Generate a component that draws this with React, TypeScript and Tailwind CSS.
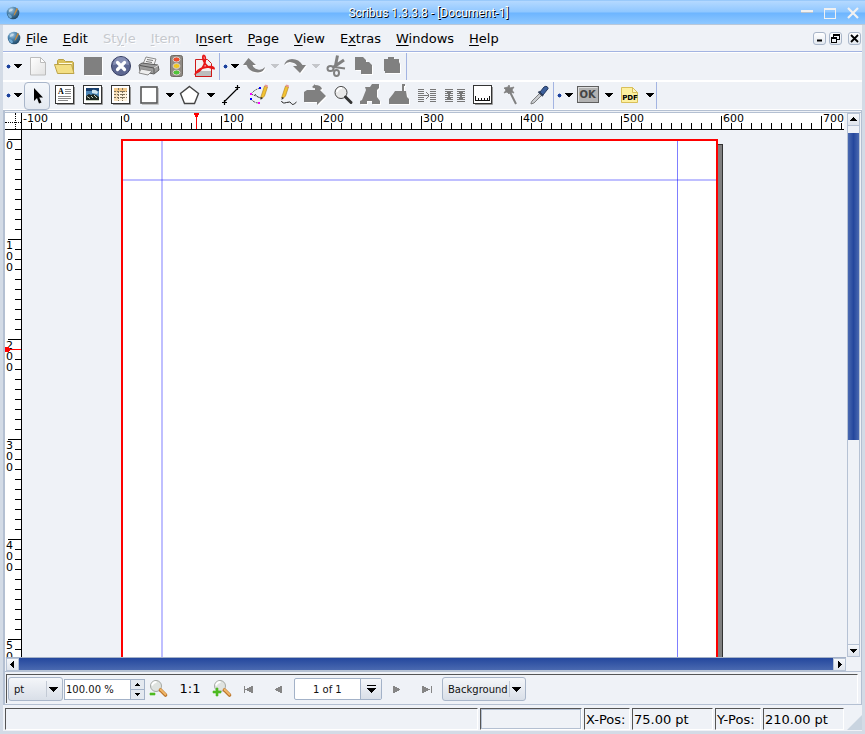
import React from "react";

const SANS = "font-['DejaVu_Sans','Verdana',sans-serif]";

/* ---------- shared bits ---------- */

function Icon({ children }: { children: React.ReactNode }) {
  return (
    <svg viewBox="0 0 24 24" className="block size-6" aria-hidden="true">
      {children}
    </svg>
  );
}

function Down({ muted = false }: { muted?: boolean }) {
  return (
    <svg viewBox="0 0 8 4" className={muted ? "block h-1 w-2 fill-[#c4c6ca]" : "block h-1 w-2 fill-black"} shapeRendering="crispEdges" aria-hidden="true">
      <path d="M0 0h8v1h-1v1h-1v1h-1v1h-2v-1h-1v-1h-1v-1h-1z" />
    </svg>
  );
}

function Globe() {
  return (
    <svg viewBox="0 0 14 14" className="block size-3.5" aria-hidden="true">
      <defs>
        <radialGradient id="globe" cx="0.35" cy="0.25" r="0.8">
          <stop offset="0" stopColor="#a9c9e0" />
          <stop offset="0.45" stopColor="#4b83ad" />
          <stop offset="1" stopColor="#1f4562" />
        </radialGradient>
      </defs>
      <circle cx="7" cy="7" r="6.300" fill="url(#globe)" />
      <path d="M2 8q3 0 4 3l-1 1.500Q2 11 2 8z" fill="#6fa9d2" />
      <path d="M10.500 2L8 8l-.5 2 1.500-1.500L12 3z" fill="#c98b3c" />
      <path d="M3 4q2-2 4-1l-1 2-3 1z" fill="#d5e6f0" opacity="0.700" />
    </svg>
  );
}

function Tool({ label, children, active = false }: { label: string; children: React.ReactNode; active?: boolean }) {
  return (
    <button type="button" aria-label={label} className="flex w-7 justify-center">
      <span className={active ? "rounded-[3px] bg-linear-to-b from-[#f4f7fb] to-[#e4e9f1] outline outline-[#a9b6ca]" : ""}>
        <Icon>{children}</Icon>
      </span>
    </button>
  );
}

function Drop({ label, muted = false }: { label: string; muted?: boolean }) {
  return (
    <button type="button" aria-label={label} className="flex h-6 w-[13px] items-center justify-center">
      <Down muted={muted} />
    </button>
  );
}

function Handle({ label }: { label: string }) {
  return (
    <span className="flex h-6 w-5 items-center gap-[3px] pl-[3px]">
      <svg viewBox="0 0 5 5" className="size-[5px]" shapeRendering="crispEdges" aria-hidden="true">
        <path d="M1 1h3v3h-3z" fill="#1c419c" />
        <path d="M2 0h1v1h-1zM2 4h1v1h-1zM0 2h1v1h-1zM4 2h1v1h-1z" fill="#8fa6d6" />
      </svg>
      <button type="button" aria-label={label}>
        <Down />
      </button>
    </span>
  );
}

function Toolbar({ children }: { children: React.ReactNode }) {
  return <div className="flex h-[29px] border-y border-white pt-px">{children}</div>;
}

function Bar() {
  return <span className="-mt-px w-px bg-[#a3b4e2]" />;
}

/* ---------- tool icons ---------- */

const GREY = "#808080";

function Grey({ d }: { d: string }) {
  return (
    <>
      <path d={d} fill="#fff" transform="translate(1 1)" />
      <path d={d} fill={GREY} />
    </>
  );
}

function Framed() {
  return (
    <>
      <path d="M4 21.500h17.500V4" stroke="#999" fill="none" />
      <rect x="2.500" y="2.500" width="18" height="18" fill="#fff" stroke="#333" />
    </>
  );
}

function NewIcon() {
  return (
    <>
      <defs>
        <linearGradient id="sheet" x1="0" y1="0" x2="1" y2="1">
          <stop offset="0" stopColor="#fff" />
          <stop offset="1" stopColor="#e2e2e2" />
        </linearGradient>
      </defs>
      <path d="M5.500 3.500h10l5 5v12.500h-15z" fill="url(#sheet)" stroke="#bcbcbc" />
      <path d="M15.500 3.500v5h5z" fill="#fff" stroke="#bcbcbc" />
    </>
  );
}

function OpenIcon() {
  return (
    <>
      <path d="M4.500 17V6.500l1-1h5l2 2h7l1 1V18z" fill="#dcc25a" stroke="#b8a046" />
      <path d="M6 9h13v5H6z" fill="#fffbe0" />
      <path d="M1.500 10.500h17l2.500 9H4.500z" fill="#f3df84" stroke="#bda44a" />
    </>
  );
}

function CloseIcon() {
  return (
    <>
      <circle cx="12" cy="12" r="9.500" fill="#5d6791" stroke="#363e63" />
      <path d="M4 11a8 8 0 0116 0q-8-2-16 0z" fill="#8790b5" />
      <path d="M8.500 8.500l7 7M15.500 8.500l-7 7" stroke="#fff" strokeWidth="3.200" strokeLinecap="round" />
    </>
  );
}

function PrintIcon() {
  return (
    <>
      <path d="M6 10l3-7 10 2-2 6z" fill="#f2f2f2" stroke="#8d8d8d" />
      <path d="M10 5.500l6 1M9 7.500l6 1" stroke="#777" />
      <path d="M2 11l3-2 16 2 1 5-5 4-14-3z" fill="#9c9c9c" stroke="#5c5c5c" />
      <path d="M3 11.500l14 2.500v5" fill="none" stroke="#555" />
      <path d="M4 15l11 2-4 4-9-2z" fill="#eee" stroke="#8a8a8a" />
      <path d="M17 14l5-3" stroke="#d9d9d9" />
    </>
  );
}

function TrafficIcon() {
  return (
    <>
      <rect x="5.500" y="1.500" width="12" height="21" rx="2" fill="#8f8a84" stroke="#6e6963" />
      <ellipse cx="11.500" cy="5.500" rx="3.500" ry="2.500" fill="#ee4b2b" stroke="#d8d0c8" />
      <ellipse cx="11.500" cy="12" rx="3.500" ry="2.500" fill="#f0c71e" stroke="#d8d0c8" />
      <ellipse cx="11.500" cy="18.500" rx="3.500" ry="2.500" fill="#4fc53a" stroke="#d8d0c8" />
    </>
  );
}

function PdfIcon() {
  return (
    <>
      <path d="M2.500 5.500h12l4 4v13h-16z" fill="#f3f1f1" stroke="#c22" />
      <path d="M3 17h15v5H3z" fill="#bdbdbd" />
      <path d="M2.500 6v16.500h16V10" fill="none" stroke="#d01818" />
      <path d="M3 19q7-3 9-11 1-6-1-6.500-2 0-.5 5Q13 14 21 14.500 21 12 14 13 6 14 3 19z" fill="none" stroke="#e81717" strokeWidth="1.800" />
    </>
  );
}

function CutIcon() {
  return (
    <g fill="none" stroke={GREY}>
      <path d="M13.500 1.500L11 14M20 6L9 13.500" strokeWidth="3" />
      <ellipse cx="6.500" cy="14.500" rx="3" ry="2.500" strokeWidth="2" />
      <ellipse cx="12.500" cy="19" rx="2.500" ry="3" strokeWidth="2" />
      <path d="M10 13l11 1.500" strokeWidth="2" />
    </g>
  );
}

function PointerIcon() {
  return <path d="M9 5v13l3-3 2 5.500 2.500-1-2.300-5H18z" fill="#000" />;
}

function TextFrameIcon() {
  return (
    <>
      <Framed />
      <text x="5" y="11" fontSize="8" fontWeight="700" fontFamily="Liberation Serif, serif">A</text>
      <path d="M12 6.500h6M12 8.500h6M12 10.500h6M5 13.500h13M5 15.500h13M5 17.500h10" stroke="#888" shapeRendering="crispEdges" />
    </>
  );
}

function ImageFrameIcon() {
  return (
    <>
      <Framed />
      <rect x="5" y="5" width="13" height="13" fill="#4d87b8" />
      <path d="M5 5h13v3H5z" fill="#173e6e" />
      <path d="M11 7q4-1 6 2l-1 2-5-1z" fill="#cfe4f0" />
      <path d="M5 13l3-2 2 1 2-1 3 1 3 2v4H5z" fill="#1c2622" />
      <path d="M6 13.500l3 2M10 13l2 2M13 12l3 3M5 17.500h13" stroke="#c8d0c0" />
    </>
  );
}

function TableIcon() {
  return (
    <>
      <Framed />
      <rect x="5" y="5" width="13" height="13" fill="#fdf1dc" />
      <path d="M5 5h13v4H5z" fill="#f3c98b" />
      <path d="M5 9h4v9H5z" fill="#f8dfb8" />
      <path d="M5 8.500h13M5 11.500h13M5 14.500h13M9.500 5v13M13.500 5v13" stroke="#7d705a" strokeDasharray="2 1" fill="none" shapeRendering="crispEdges" />
    </>
  );
}

function RectIcon() {
  return (
    <>
      <path d="M5 21.500h16.500V5" stroke="#c4c4c4" fill="none" />
      <rect x="4" y="4" width="16" height="16" fill="#fff" stroke="#555" strokeWidth="1.600" />
    </>
  );
}

function PolygonIcon() {
  return <path d="M11.500 3.500l9 7-4 10H6.500L2.500 10.500z" fill="#fff" stroke="#444" strokeWidth="1.400" />;
}

function LineIcon() {
  return <path d="M5 19L19 5M3 19.500h5M5.500 17v5M16 4.500h5M18.500 2v5" stroke="#000" strokeWidth="1.200" fill="none" />;
}

function Pencil() {
  return (
    <>
      <path d="M13.500 15l1-3 3-9 3 1-3 9-2 2z" fill="#f3c232" stroke="#a87a18" strokeWidth="0.600" />
      <path d="M17.500 3l1-1.500 2.500 1-.5 2z" fill="#e79595" />
      <path d="M13.500 17l.5-3 2 1z" fill="#333" />
    </>
  );
}

function BezierIcon() {
  return (
    <>
      <path d="M4 11q4-5 10-6M4 16q3 4 8 4M8 11q3 4 6 4M4 11l10 4" stroke="#444" fill="none" strokeDasharray="2 1" />
      <Pencil />
      <path d="M3 10h2v2H3zM11 19h2v2h-2z" fill="#f0f" />
      <path d="M3 15h2v2H3zM12 4h2v2h-2z" fill="#00f" />
    </>
  );
}

function FreehandIcon() {
  return (
    <>
      <g transform="translate(-7 0)"><Pencil /></g>
      <path d="M6.500 18q1 3 5 1.500t5 1 5-1.500" stroke="#222" fill="none" />
    </>
  );
}

function ZoomIcon() {
  return (
    <>
      <circle cx="10" cy="9.500" r="6" fill="#e8e8e8" stroke="#444" />
      <path d="M6 9q1-4 5-4" stroke="#fff" strokeWidth="2" fill="none" />
      <path d="M14.500 14l5.500 5.500" stroke="#333" strokeWidth="3" strokeLinecap="round" />
    </>
  );
}

function LinkIcon() {
  return (
    <g stroke="#777" shapeRendering="crispEdges">
      <path d="M3 6.500h6M3 8.500h6M3 10.500h6M3 12.500h6M3 14.500h6M3 16.500h6M3 18.500h6M15 6.500h6M15 8.500h6M15 10.500h6M15 12.500h6M15 14.500h6M15 16.500h6M15 18.500h6M8 12.500h6" />
      <path d="M11 9.500h1M12 10.500h1M13 11.500h1M13 13.500h1M12 14.500h1M11 15.500h1" />
    </g>
  );
}

function UnlinkIcon() {
  return (
    <g stroke="#777" shapeRendering="crispEdges">
      <path d="M2 6.500h8M2 8.500h8M2 10.500h8M2 12.500h8M2 14.500h8M2 16.500h8M2 18.500h8M14 6.500h8M14 8.500h8M14 10.500h8M14 12.500h8M14 14.500h8M14 16.500h8M14 18.500h8" />
      <path d="M4 9.500h4M5 11.500h2M5 13.500h2M4 15.500h4M16 9.500h4M17 11.500h2M17 13.500h2M16 15.500h4" />
    </g>
  );
}

function MeasureIcon() {
  return (
    <>
      <Framed />
      <path d="M4.500 13v4.500h14V13M7.500 15v2M10.500 15v2M13.500 15v2M16.500 15v2" stroke="#111" fill="none" shapeRendering="crispEdges" />
    </>
  );
}

function WandIcon() {
  return (
    <>
      <path d="M10 2l1 3 4-1-2 3 2 3-4-1-1 2-2-2-3 1 2-3-2-2 4-1z" fill={GREY} stroke={GREY} strokeWidth="0.800" />
      <path d="M11 9l6 12" stroke={GREY} strokeWidth="2" />
    </>
  );
}

function DropperIcon() {
  return (
    <>
      <path d="M4 20l1-2 8-8 2 2-8 8-3 1z" fill="#c9ccd0" stroke="#666" strokeWidth="0.800" />
      <path d="M11.500 8.500l4.500 4.500" stroke="#33415c" strokeWidth="2" />
      <path d="M13 9l4-5q2-1.500 3.500 0T20 7l-4 5z" fill="#3c5f9b" stroke="#22375e" />
    </>
  );
}

function OkIcon() {
  return (
    <>
      <rect x="1.500" y="3.500" width="21" height="16" fill="#b2b2b2" stroke="#5f5f5f" />
      <path d="M2.500 18.500v-14h19" fill="none" stroke="#dedede" />
      <text x="11.500" y="15" textAnchor="middle" fontSize="10" fontWeight="700" fill="#444" fontFamily="DejaVu Sans, sans-serif">OK</text>
    </>
  );
}

function PdfFieldIcon() {
  return (
    <>
      <path d="M4.500 4.500h11l5 5v10h-16z" fill="#fdf0a0" stroke="#d9bf5a" />
      <path d="M15.500 4.500v5h5z" fill="#fff7c8" stroke="#d9bf5a" />
      <text x="13" y="17" textAnchor="middle" fontSize="7" fontWeight="700" fontFamily="DejaVu Sans, sans-serif">PDF</text>
    </>
  );
}

function LensIcon({ plus = false }: { plus?: boolean }) {
  return (
    <>
      <circle cx="10" cy="9" r="5.500" fill="#dfe3e0" stroke="#a4a8a4" />
      <path d="M6 8.500q1-3.500 4.500-3.500" stroke="#fff" strokeWidth="2" fill="none" />
      <path d="M14.500 13l5 5" stroke="#b9732a" strokeWidth="3.600" strokeLinecap="round" />
      <path d="M14.500 12.500l5 5" stroke="#f0b768" strokeWidth="1.800" strokeLinecap="round" />
      <path d={plus ? "M6 11h2v3h3v2h-3v3h-2v-3h-3v-2h3z" : "M4 16h5v2H4z"} fill="#4dbb22" stroke="#4dbb22" strokeWidth="0.600" />
    </>
  );
}

/* ---------- window parts ---------- */

function TitleBar() {
  return (
    <header className="flex h-[25px] items-center border-b border-[#b9c8da] bg-[linear-gradient(#7db9f5_0,#b5d9ff_1px,#8fc7ff_12px,#6db5ff_13px,#8ec8ff_24px)] px-1.5 pt-[2px]">
      <span className="flex flex-1"><Globe /></span>
      <h1 className="mr-2 font-['Roboto','Open_Sans',sans-serif] text-[12px] leading-4 text-white [text-shadow:1px_1px_0_#000]">Scribus 1.3.3.8 - [Document-1]</h1>
      <span className="flex flex-1 items-center justify-end gap-[11px]">
        <button type="button" aria-label="Minimize" className="mb-1 h-[3px] w-3 border-b border-[#b9c4cf] bg-[#f1f1f1]" />
        <button type="button" aria-label="Maximize" className="h-[11px] w-3 border border-t-2 border-[#f1f1f1]" />
        <button type="button" aria-label="Close">
          <svg viewBox="0 0 12 12" className="block size-3" aria-hidden="true">
            <path d="M1 1l10 10M11 1L1 11" stroke="#f1f1f1" strokeWidth="2.200" />
          </svg>
        </button>
      </span>
    </header>
  );
}

const MENUS: [string, number, boolean][] = [
  ["File", 0, true], ["Edit", 0, true], ["Style", 2, false], ["Item", 0, false], ["Insert", 1, true],
  ["Page", 0, true], ["View", 0, true], ["Extras", 1, true], ["Windows", 0, true], ["Help", 0, true],
];

function MdiButton({ label, children }: { label: string; children: React.ReactNode }) {
  return (
    <button type="button" aria-label={label} className="flex size-[13px] items-center justify-center rounded-[3px] border border-[#a9b6c9] bg-linear-to-b from-white to-[#e3e8ef]">
      <svg viewBox="0 0 11 11" className="size-[11px] shrink-0" fill="none" stroke="#000" aria-hidden="true">{children}</svg>
    </button>
  );
}

function MenuBar() {
  return (
    <nav className="flex h-[27px] items-center border-b border-[#a3b4e2] pl-1">
      <Globe />
      <div className="flex flex-1 pt-[2px] pl-px text-[13px] leading-5">
        {MENUS.map(([name, key, enabled]) => (
          <button key={name} type="button" disabled={!enabled} className={enabled ? "pr-[11px] pl-1 text-black" : "pr-[11px] pl-1 text-[#c6c9ce] [text-shadow:1px_1px_0_#fff]"}>
            {name.slice(0, key)}
            <span className="underline underline-offset-2">{name[key]}</span>
            {name.slice(key + 1)}
          </button>
        ))}
      </div>
      <div className="flex gap-[3px] pr-px">
        <MdiButton label="Minimize document"><path d="M3 7.500h5" strokeWidth="2" /></MdiButton>
        <MdiButton label="Restore document">
          <path d="M3.500 4V1.500h6v5H7M3.500 2.500h6M1.500 4.500h5v5h-5zM1.500 5.500h5" shapeRendering="crispEdges" />
        </MdiButton>
        <span />
        <MdiButton label="Close document"><path d="M2 2l7 7M9 2L2 9" strokeWidth="1.800" /></MdiButton>
      </div>
    </nav>
  );
}

function Toolbars() {
  return (
    <div>
      <Toolbar>
        <Handle label="File toolbar" />
        <Tool label="New"><NewIcon /></Tool>
        <Tool label="Open"><OpenIcon /></Tool>
        <Tool label="Save"><Grey d="M3 3h18v18H3z" /></Tool>
        <Tool label="Close"><CloseIcon /></Tool>
        <Tool label="Print"><PrintIcon /></Tool>
        <Tool label="Preflight"><TrafficIcon /></Tool>
        <Tool label="Save as PDF"><PdfIcon /></Tool>
        <Bar />
        <Handle label="Edit toolbar" />
        <Tool label="Undo"><Grey d="M6.500 4L1 11h3.500Q7 18 16 18.500 22 18 23 13 20 16.500 16 15.500 11 14.500 10.500 11H14z" /></Tool>
        <Drop label="Undo steps" muted />
        <Tool label="Redo"><Grey d="M17 19l6-8h-3.500Q16 5 9 5 3 5 1 11 5 7 9 8.500q4 .5 5 3.500h-4z" /></Tool>
        <Drop label="Redo steps" muted />
        <Tool label="Cut"><CutIcon /></Tool>
        <Tool label="Copy"><Grey d="M3 3h8l3 3v2h3l3 3v9H9v-4H3z" /></Tool>
        <Tool label="Paste"><Grey d="M4 5h4V3h6v2h5v3l1 2v9H5v-2H4z" /></Tool>
        <Bar />
      </Toolbar>
      <Toolbar>
        <Handle label="Tools toolbar" />
        <Tool label="Select" active><PointerIcon /></Tool>
        <Tool label="Text frame"><TextFrameIcon /></Tool>
        <Tool label="Image frame"><ImageFrameIcon /></Tool>
        <Tool label="Table"><TableIcon /></Tool>
        <Tool label="Shape"><RectIcon /></Tool>
        <Drop label="Shape kinds" />
        <Tool label="Polygon"><PolygonIcon /></Tool>
        <Drop label="Polygon properties" />
        <Tool label="Line"><LineIcon /></Tool>
        <Tool label="Bezier curve"><BezierIcon /></Tool>
        <Tool label="Freehand line"><FreehandIcon /></Tool>
        <Tool label="Rotate"><Grey d="M1 9l3-2h8V5h-1l1 1-3-2 3-3v1q6 0 7 4l-2 1 6 6-9 9v-3H1z" /></Tool>
        <Tool label="Zoom"><ZoomIcon /></Tool>
        <Tool label="Edit frame"><Grey d="M6 4h5l2-3h7v4l-2 2v7l3 4v3h-8v-3H8v3H1v-3l2-1 4-10z" /></Tool>
        <Tool label="Edit text"><Grey d="M15 1h3v2h-1v5h2l1 6 2 2v5H2v-5l4-5 2-3h7z" /></Tool>
        <Tool label="Link frames"><LinkIcon /></Tool>
        <Tool label="Unlink frames"><UnlinkIcon /></Tool>
        <Tool label="Measure"><MeasureIcon /></Tool>
        <Tool label="Copy properties"><WandIcon /></Tool>
        <Tool label="Eye dropper"><DropperIcon /></Tool>
        <Bar />
        <Handle label="PDF toolbar" />
        <Tool label="PDF button"><OkIcon /></Tool>
        <Drop label="PDF field kinds" />
        <Tool label="PDF annotation"><PdfFieldIcon /></Tool>
        <Drop label="PDF annotation kinds" />
        <Bar />
      </Toolbar>
    </div>
  );
}

const TENS = [1, 2, 3, 4, 5, 6, 7, 8, 9, 10];

/* Enough hundreds to span a given length, starting at a given value. */
function hundreds(from: number, length: number) {
  return Array.from({ length: Math.ceil(length / 100) }, (_, i) => from + i * 100);
}

function TopRuler() {
  return (
    <div className="relative flex h-[17px] min-w-0 flex-1 overflow-hidden border-b border-l border-black bg-white">
      {hundreds(-100, window.innerWidth).map((n) => (
        <div key={n} className="relative flex w-[100px] shrink-0 items-end">
          <span className="absolute top-0 left-px text-[11px] leading-[11px]">{n}</span>
          {TENS.map((t) => (
            <i key={t} className={t === 10 ? "h-[13px] w-2.5 border-r border-black" : "h-1.5 w-2.5 border-r border-black"} />
          ))}
        </div>
      ))}
      <svg viewBox="0 0 5 16" className="absolute top-0 left-[172px] h-4 w-[5px] fill-[#f00]" shapeRendering="crispEdges" aria-hidden="true">
        <path d="M0 0h5v2h-1v2h-1v12h-1v-12h-1v-2h-1z" />
      </svg>
    </div>
  );
}

function SideRuler() {
  return (
    <div className="relative w-[17px] shrink-0 overflow-hidden border-r border-black bg-white">
      <div className="flex h-2.5 justify-end"><i className="w-[13px] border-b border-black" /></div>
      {hundreds(0, window.innerHeight - 210).map((n) => (
        <div key={n} className="relative flex h-[100px] flex-col items-end">
          <span className="absolute top-0 left-px w-2 text-[11px] leading-[11px] break-all">{n}</span>
          {TENS.map((t) => (
            <i key={t} className={t === 10 ? "h-2.5 w-[13px] border-b border-black" : "h-2.5 w-1.5 border-b border-black"} />
          ))}
        </div>
      ))}
      <svg viewBox="0 0 16 5" className="absolute top-[217px] left-0 h-[5px] w-4 fill-[#f00]" shapeRendering="crispEdges" aria-hidden="true">
        <path d="M0 0h4v1h1v1h11v1h-11v1h-1v1h-4z" />
      </svg>
    </div>
  );
}

function Canvas() {
  return (
    <main className="flex min-w-0 flex-1 overflow-hidden pt-[9px] pl-[99px]">
      <div className="relative h-[842px] w-[597px] shrink-0 border-2 border-[#f00] bg-white">
        <span className="absolute inset-y-0 left-[38px] w-0.5 bg-[#0000ff]/25" />
        <span className="absolute inset-x-0 top-[38px] h-0.5 bg-[#0000ff]/25" />
        <span className="absolute inset-y-0 right-[38px] w-px bg-[#0000ff]/50" />
      </div>
      <div className="mt-[5px] h-[842px] w-[5px] shrink-0 border-t border-r border-[#333] bg-[#808080]" />
    </main>
  );
}

function ArrowButton({ label, d }: { label: string; d: string }) {
  return (
    <button type="button" aria-label={label} className="flex size-[13px] shrink-0 items-center justify-center border border-[#b6c2d4] bg-linear-to-b from-[#f6f8fb] to-[#dfe4ec]">
      <svg viewBox="0 0 7 7" className="size-[7px] fill-black" shapeRendering="crispEdges" aria-hidden="true"><path d={d} /></svg>
    </button>
  );
}

function Workspace() {
  return (
    <section className="flex min-h-0 flex-1 flex-col border-b border-[#b4c0d2]">
      <div className="flex min-h-0 flex-1">
        <div className="flex min-w-0 flex-1 flex-col">
          <div className="flex">
            <div className="relative h-[17px] w-4 shrink-0 border-b border-black bg-white">
              <span className="absolute top-[9px] left-0 w-full border-t border-dotted border-black" />
              <span className="absolute top-0 left-2.5 h-full border-l border-dotted border-black" />
            </div>
            <TopRuler />
          </div>
          <div className="flex min-h-0 flex-1">
            <SideRuler />
            <Canvas />
          </div>
        </div>
        <div className="mr-px ml-[3px] flex w-[13px] shrink-0 flex-col">
          <ArrowButton label="Scroll up" d="M0 5h7v-1h-1v-1h-1v-1h-1v-1h-1v1h-1v1h-1v1h-1z" />
          <div className="flex-1 border-x border-[#b6c2d4] pt-[7px]">
            <div className="h-[60%] bg-[linear-gradient(90deg,#4a69b0,#24479d_50%,#4a69b0)]" />
          </div>
          <ArrowButton label="Scroll down" d="M0 2h7v1h-1v1h-1v1h-1v1h-1v-1h-1v-1h-1v-1h-1z" />
        </div>
      </div>
      <div className="mr-[15px] ml-px flex border-t border-[#a5b2c8]">
        <ArrowButton label="Scroll left" d="M5 0v7h-1v-1h-1v-1h-1v-1h-1v-1h1v-1h1v-1h1v-1z" />
        <div className="flex-1 border-b border-[#b6c2d4] bg-linear-to-b from-[#24479d] to-[#4a69b0]" />
        <ArrowButton label="Scroll right" d="M2 0v7h1v-1h1v-1h1v-1h1v-1h-1v-1h-1v-1h-1v-1z" />
      </div>
    </section>
  );
}

function PickButton({ label, value, size }: { label: string; value: string; size: string }) {
  return (
    <label className={`relative flex h-6 shrink-0 rounded-[3px] border border-[#a9b6c9] bg-linear-to-b from-[#f4f6f9] to-[#d9dfe8] ${size}`}>
      <select aria-label={label} className="w-full appearance-none pl-[5px] text-[10px] text-[#111]"><option>{value}</option></select>
      <span className="pointer-events-none absolute inset-y-[3px] right-[4px] flex w-3 items-center justify-end border-l border-[#c3cad5]">
        <svg viewBox="0 0 9 5" className="h-[5px] w-[9px]" shapeRendering="crispEdges" aria-hidden="true"><path d="M0 0h9v1h-1v1h-1v1h-1v1h-1v1h-1v-1h-1v-1h-1v-1h-1v-1h-1z" /></svg>
      </span>
    </label>
  );
}

function NavButton({ label, d }: { label: string; d: string }) {
  return (
    <button type="button" aria-label={label} className="flex size-[30px] items-center justify-center">
      <svg viewBox="0 0 10 9" className="h-[9px] w-2.5" shapeRendering="crispEdges" aria-hidden="true">
        <path d={d} fill="#858585" />
      </svg>
    </button>
  );
}

function ControlBar() {
  return (
    <section className="mt-[2px] mr-[3px] mb-px ml-px flex h-[29px] items-center border-t border-r border-l border-t-[#555] border-r-white border-l-[#555] pl-px">
      <PickButton label="Unit" value="pt" size="w-[55px]" />
      <div className="ml-px flex h-[21px] w-[81px] border border-[#a3b2c8] bg-white">
        <input aria-label="Zoom" defaultValue="100.00 %" className="min-w-0 flex-1 bg-white pl-px text-[10px] text-[#111]" />
        <span className="flex w-3.5 flex-col border-l border-[#a3b2c8] bg-[#e4e9f0]">
          <button type="button" aria-label="Zoom up" className="flex flex-1 items-center justify-center border-b border-[#a3b2c8]">
            <svg viewBox="0 0 5 3" className="h-[3px] w-[5px]" shapeRendering="crispEdges" aria-hidden="true"><path d="M2 0h1v1h1v1h1v1H0V2h1V1h1z" /></svg>
          </button>
          <button type="button" aria-label="Zoom down" className="flex flex-1 items-center justify-center">
            <svg viewBox="0 0 5 3" className="h-[3px] w-[5px]" shapeRendering="crispEdges" aria-hidden="true"><path d="M0 0h5v1H4v1H3v1H2V2H1V1H0z" /></svg>
          </button>
        </span>
      </div>
      <button type="button" aria-label="Zoom out" className="ml-px"><Icon><LensIcon /></Icon></button>
      <button type="button" className="w-10 text-[13px] leading-5">1:1</button>
      <button type="button" aria-label="Zoom in"><Icon><LensIcon plus /></Icon></button>
      <NavButton label="First page" d="M0 1h1v7h-1zM1 4h2V3h2V2h2V1h2v7H7V7H5V6H3V5H1z" />
      <NavButton label="Previous page" d="M1 4h1V3h2V2h2V1h2v7H6V7H4V6H2V5H1z" />
      <label className="relative flex h-[22px] w-[88px] shrink-0 rounded-[2px] border border-[#a3b2c8] bg-white">
        <select aria-label="Page" className="w-full appearance-none pl-[18px] text-[10px] text-[#111]"><option>1 of 1</option></select>
        <span className="pointer-events-none absolute inset-y-0 right-0 flex w-[21px] items-center justify-center border-l border-[#a3b2c8] bg-linear-to-b from-[#f4f6f9] to-[#d9dfe8]">
          <svg viewBox="0 0 9 8" className="h-2 w-[9px]" shapeRendering="crispEdges" aria-hidden="true"><path d="M0 0h9v1H0zM0 3h9v1h-1v1h-1v1h-1v1h-1v1h-1v-1h-1v-1h-1v-1h-1v-1h-1z" /></svg>
        </span>
      </label>
      <NavButton label="Next page" d="M1 1h2v1h2v1h2v1h1v1h-1v1h-2v1h-2v1h-2z" />
      <NavButton label="Last page" d="M0 1h2v1h2v1h2v1h2v1h-2v1h-2v1h-2v1h-2zM9 1h1v7h-1z" />
      <PickButton label="Layer" value="Background" size="w-[84px]" />
    </section>
  );
}

function Cell({ size, children }: { size: string; children?: React.ReactNode }) {
  return (
    <div className={`h-[22px] border border-t-[#555] border-r-white border-b-white border-l-[#555] pl-px text-[13px] leading-[21px] whitespace-nowrap ${size}`}>{children}</div>
  );
}

function StatusBar() {
  return (
    <footer className="flex gap-0.5 pt-[3px] pb-px pl-0.5">
      <Cell size="flex-1" />
      <div className="h-[22px] w-[102px] border border-[#555] border-r-white border-b-white"><div className="h-full border border-[#b4c0d2]" /></div>
      <Cell size="w-[46px]">X-Pos:</Cell>
      <Cell size="w-[81px]">75.00 pt</Cell>
      <Cell size="w-[46px]">Y-Pos:</Cell>
      <Cell size="w-[81px]">210.00 pt</Cell>
      <svg viewBox="0 0 15 15" className="ml-px size-[15px] self-end" aria-hidden="true">
        <path d="M0 15L15 0v15z" fill="#c9d4e0" />
      </svg>
    </footer>
  );
}

export default function App() {
  return (
    <div className={`flex h-screen flex-col overflow-hidden bg-[#eff2f7] text-black ${SANS}`}>
      <TitleBar />
      <div className="flex min-h-0 flex-1 flex-col border-x-[3px] border-b-[3px] border-[#d3dbe6]">
        <MenuBar />
        <Toolbars />
        <div className="flex min-h-0 flex-1 flex-col border-t border-r border-b border-[#b4c0d2]">
          <div className="flex min-h-0 flex-1 flex-col border-l-2 border-[#b4c0d2]">
            <div className="mt-px border-t border-[#b4c0d2]" />
            <Workspace />
            <ControlBar />
          </div>
        </div>
        <StatusBar />
      </div>
    </div>
  );
}
